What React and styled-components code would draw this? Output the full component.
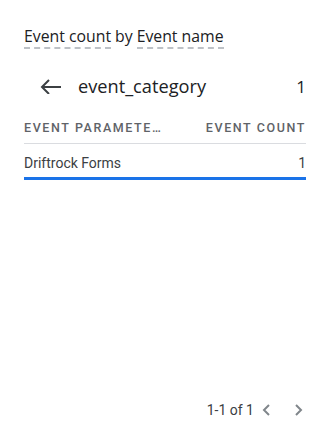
import React from 'react';
import styled, { createGlobalStyle } from 'styled-components';

const GlobalStyle = createGlobalStyle`
  html, body {
    margin: 0;
    padding: 0;
    background: #ffffff;
  }
  body {
    font-family: Roboto, "Noto Sans", Arial, sans-serif;
  }
`

const Card = styled.div`
  width: 332px;
  height: 436px;
  box-sizing: border-box;
  padding: 26px 26px 16px 24px;
  display: flex;
  flex-direction: column;
  background: #fff;
`

const Title = styled.div`
  font-family: "Open Sans", Roboto, sans-serif;
  font-size: 15.8px;
  color: #202124;
  line-height: 20px;
  display: flex;
  gap: 4px;
`

const Dashed = styled.span`
  border-bottom: 2px dashed #bdc1c6;
  padding-bottom: 1px;
`

const DrillRow = styled.div`
  display: flex;
  align-items: center;
  margin-top: 24px;
  padding-left: 16px;
  height: 26px;
`

const BackButton = styled.div`
  width: 22px;
  height: 22px;
  display: flex;
  align-items: center;
  justify-content: center;
  color: #3c4043;
`

const DrillName = styled.div`
  flex: 1;
  margin-left: 16px;
  font-family: "Open Sans", Roboto, sans-serif;
  font-size: 18.2px;
  color: #202124;
`

const DrillCount = styled.div`
  font-family: "Open Sans", Roboto, sans-serif;
  font-size: 17px;
  color: #202124;
`

const Table = styled.div`
  margin-top: 12px;
  display: flex;
  flex-direction: column;
`

const HeaderRow = styled.div`
  display: flex;
  justify-content: space-between;
  align-items: center;
  height: 32px;
  border-bottom: 1px solid #dadce0;
  font-size: 12.5px;
  letter-spacing: 1.6px;
  color: #5f6368;
  font-weight: 500;
`

const DataRow = styled.div`
  display: flex;
  justify-content: space-between;
  align-items: center;
  height: 36px;
  box-sizing: border-box;
  border-bottom: 3px solid #1a73e8;
  font-size: 14px;
  color: #3c4043;
  padding-top: 5px;
`

const Footer = styled.div`
  margin-top: auto;
  display: flex;
  justify-content: flex-end;
  align-items: center;
  gap: 5px;
  font-size: 14px;
  color: #3c4043;
  padding-bottom: 2px;
`

const PageButton = styled.div`
  width: 16px;
  height: 16px;
  display: flex;
  align-items: center;
  justify-content: center;
  margin-left: ${props => props.gap || 0}px;
`

const Chevron = ({ dir }) => (
  <svg width="12" height="14" viewBox="0 0 12 14">
    <path
      d={dir === 'left' ? 'M8 2 L3 7 L8 12' : 'M4 2 L9 7 L4 12'}
      fill="none"
      stroke="#80868b"
      strokeWidth="2"
    />
  </svg>
)

export default function App() {
  return (
    <>
      <GlobalStyle />
      <Card>
        <Title>
          <Dashed>Event count</Dashed>
          <span>by</span>
          <Dashed>Event name</Dashed>
        </Title>
        <DrillRow>
          <BackButton>
            <svg width="22" height="16" viewBox="0 0 22 16">
              <path d="M2 9 H21 M9 2 L2 9 L9 16" fill="none" stroke="#3c4043" strokeWidth="2" />
            </svg>
          </BackButton>
          <DrillName>event_category</DrillName>
          <DrillCount>1</DrillCount>
        </DrillRow>
        <Table>
          <HeaderRow>
            <span>EVENT PARAMETE…</span>
            <span>EVENT COUNT</span>
          </HeaderRow>
          <DataRow>
            <span>Driftrock Forms</span>
            <span>1</span>
          </DataRow>
        </Table>
        <Footer>
          <span>1-1 of 1</span>
          <PageButton><Chevron dir="left" /></PageButton>
          <PageButton gap={10}><Chevron dir="right" /></PageButton>
        </Footer>
      </Card>
    </>
  );
}
